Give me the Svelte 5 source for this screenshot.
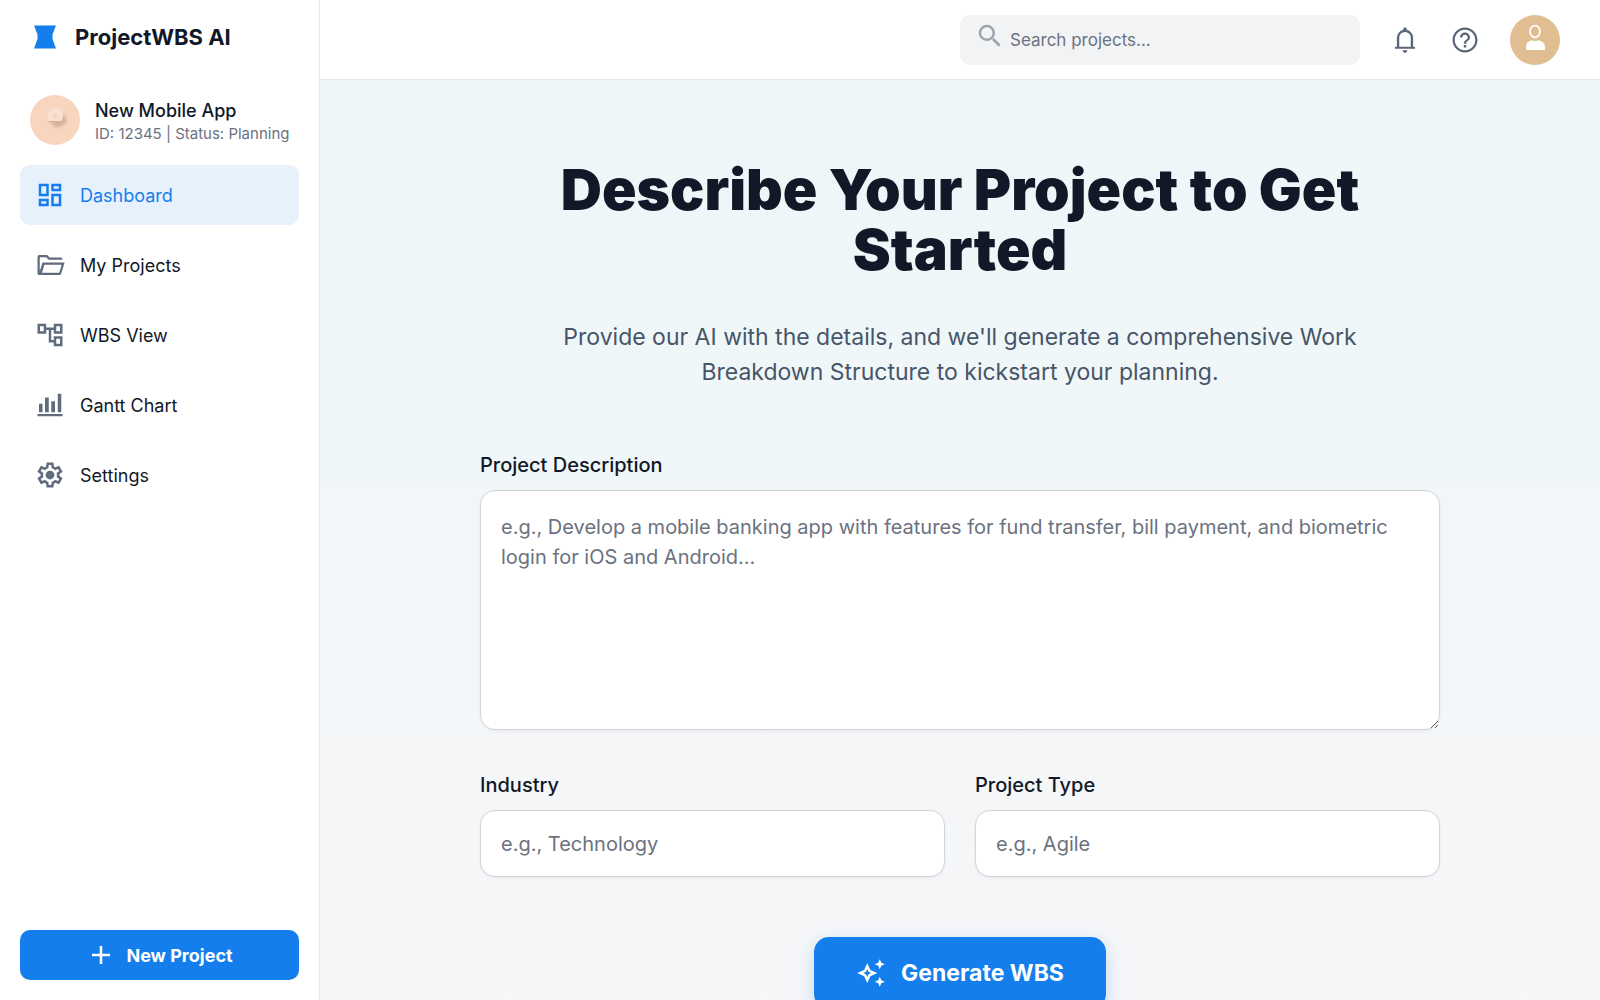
<script>
  const nav = [
    { label: 'Dashboard', active: true, d: 'M19 5v2h-4V5h4M9 5v6H5V5h4m10 8v6h-4v-6h4M9 17v2H5v-2h4M21 3h-8v6h8V3zM11 3H3v10h8V3zm10 8h-8v10h8V11zm-10 4H3v6h8v-6z' },
    { label: 'My Projects', d: 'M3.500 20Q2 20 2 18.500V5.500Q2 4 3.500 4H9.700L11.700 6H20.500Q22 6 22 7.700H11L9 5.800H4.200Q3.800 5.800 3.800 6.200V17L6 10H23.700L21 18.700Q20.600 20 19.400 20ZM5.600 18.200H19.400L21.300 11.800H7.500Z' },
    { label: 'WBS View', d: 'M22 11V3h-7v3H9V3H2v8h7V8h2v10h4v3h7v-8h-7v3h-2V8h2v3h7zM7 9H4V5h3v4zm10 6h3v4h-3v-4zm0-10h3v4h-3V5z' },
    { label: 'Gantt Chart', d: 'M2 19.200H22V21H2ZM3.200 11H6V17.800H3.200ZM8 6H11V17.800H8ZM13 9H16V17.800H13ZM18.200 3H21V17.800H18.200Z' },
    { label: 'Settings', d: 'M9.250 22L8.850 18.800Q8.525 18.675 8.238 18.500T7.675 18.125L4.700 19.375L1.950 14.625L4.525 12.675Q4.500 12.500 4.500 12.338V11.663Q4.500 11.500 4.525 11.325L1.950 9.375L4.700 4.625L7.675 5.875Q7.950 5.675 8.250 5.500T8.850 5.200L9.250 2H14.750L15.150 5.200Q15.475 5.325 15.763 5.500T16.325 5.875L19.300 4.625L22.050 9.375L19.475 11.325Q19.500 11.500 19.500 11.663V12.338Q19.500 12.500 19.450 12.675L22.025 14.625L19.275 19.375L16.325 18.125Q16.050 18.325 15.750 18.500T15.150 18.800L14.750 22ZM11 20H12.975L13.325 17.350Q14.100 17.150 14.763 16.763T15.975 15.825L18.450 16.850L19.425 15.150L17.275 13.525Q17.400 13.175 17.450 12.788T17.500 12T17.450 11.213T17.275 10.475L19.425 8.850L18.450 7.150L15.975 8.200Q15.425 7.625 14.763 7.238T13.325 6.650L13 4H11.025L10.675 6.650Q9.900 6.850 9.238 7.238T8.025 8.175L5.550 7.150L4.575 8.850L6.725 10.450Q6.600 10.825 6.550 11.200T6.500 12Q6.500 12.400 6.550 12.775T6.725 13.525L4.575 15.150L5.550 16.850L8.025 15.800Q8.575 16.375 9.238 16.763T10.675 17.350ZM12 15.500A3.500 3.500 0 1 0 12 8.500A3.500 3.500 0 1 0 12 15.500Z' }
  ];
</script>

<div class="app">
  <aside>
    <div class="brand">
      <svg viewBox="0 0 24 24" width="24" height="24"><path d="M1 .5H23L19.500 9.500V14L23 23.500H1L4.500 14V9.500Z" fill="#147fec" /></svg>
      <span>ProjectWBS AI</span>
    </div>
    <div class="project">
      <svg class="avatar" viewBox="0 0 50 50" width="50" height="50">
        <defs>
          <filter id="soft" x="-50%" y="-50%" width="200%" height="200%"><feGaussianBlur stdDeviation="1.5" /></filter>
        </defs>
        <circle cx="25" cy="25" r="25" fill="#f7d5bf" />
        <path d="M20 27L34 19L37 27L31 32H25Z" fill="#c9a48c" opacity=".7" filter="url(#soft)" />
        <path d="M18 26V20a7.500 7 0 0 1 15 0V24q0 2.500-2.500 2.500Z" fill="#fae0d0" />
        <path d="M18.500 26.500H30.500q2 0 2.300-3" fill="none" stroke="#d4b199" />
        <circle cx="25" cy="21" r="1.500" fill="none" stroke="#efc9b2" />
      </svg>
      <div>
        <div class="pname">New Mobile App</div>
        <div class="pmeta">ID: 12345 | Status: Planning</div>
      </div>
    </div>
    <nav>
      {#each nav as item}
        <a href="#top" class:active={item.active}>
          <svg viewBox="0 0 24 24" width="30" height="30"><path fill="currentColor" fill-rule="evenodd" d={item.d} /></svg>
          <span>{item.label}</span>
        </a>
      {/each}
    </nav>
    <button class="new" type="button">
      <svg viewBox="0 0 24 24" width="30" height="30"><path d="M12 4.800v14.400M4.800 12h14.400" stroke="currentColor" stroke-width="2" /></svg>
      <span>New Project</span>
    </button>
  </aside>

  <div class="page">
    <header>
      <label class="search">
        <svg viewBox="0 0 24 24" width="30" height="30"><path fill="currentColor" d="M15.500 14h-.79l-.28-.27A6.471 6.471 0 0 0 16 9.500 6.500 6.500 0 1 0 9.500 16c1.610 0 3.090-.59 4.230-1.570l.27.28v.79l5 4.990L20.490 19l-4.990-5zm-6 0C7.010 14 5 11.990 5 9.500S7.010 5 9.500 5 14 7.010 14 9.500 11.990 14 9.500 14z" /></svg>
        <input type="search" placeholder="Search projects..." aria-label="Search projects" />
      </label>
      <button class="icon" type="button" aria-label="Notifications">
        <svg viewBox="0 0 24 24" width="30" height="30"><path fill="currentColor" fill-rule="evenodd" d="M4 19V17.300H5.500V10Q5.500 7.925 7 6.100T10.300 4Q10.500 2.600 12 1.500Q13.500 2.600 13.700 4Q15.500 4.300 17 6.100T18.500 10V17.300H20V19ZM12 22.300Q10.200 21.800 10 20.200H14Q13.800 21.800 12 22.300ZM7.400 17.300H16.600V10Q16.600 8 15.200 6.800T12 5.600T8.800 6.800T7.400 10Z" /></svg>
      </button>
      <button class="icon" type="button" aria-label="Help">
        <svg viewBox="0 0 24 24" width="30" height="30"><path fill="currentColor" d="M11 18h2v-2h-2v2zm1-16C6.480 2 2 6.480 2 12s4.480 10 10 10 10-4.480 10-10S17.520 2 12 2zm0 18.200c-4.500 0-8.200-3.700-8.200-8.200s3.700-8.200 8.200-8.200 8.200 3.700 8.200 8.200-3.700 8.200-8.200 8.200zm0-14.200c-2.210 0-4 1.790-4 4h1.800c0-1.200 1-2.200 2.200-2.200s2.200.9 2.200 2.200c0 2-3.100 1.900-3.100 5h1.800c0-2.250 3.100-2.500 3.100-5 0-2.210-1.790-4-4-4z" /></svg>
      </button>
      <button class="user" type="button" aria-label="Account">
        <svg viewBox="0 0 50 50" width="50" height="50">
          <circle cx="25" cy="25" r="25" fill="#e1bd92" />
          <ellipse cx="25" cy="16.500" rx="5" ry="5.800" fill="#e1bd92" stroke="#fff" stroke-width="1.700" />
          <path d="M16 35V32.500Q16 26 22 25.200Q25 27 28 25.200Q35 26 35 32.500V35Z" fill="#fff" />
        </svg>
      </button>
    </header>

    <main id="top">
      <form>
        <h1>Describe Your Project to Get Started</h1>
        <p>Provide our AI with the details, and we'll generate a comprehensive Work Breakdown Structure to kickstart your planning.</p>
        <div class="fields">
          <div class="field">
            <label for="description">Project Description</label>
            <textarea id="description" placeholder="e.g., Develop a mobile banking app with features for fund transfer, bill payment, and biometric login for iOS and Android..."></textarea>
          </div>
          <div class="row">
            <div class="field">
              <label for="industry">Industry</label>
              <input id="industry" type="text" placeholder="e.g., Technology" />
            </div>
            <div class="field">
              <label for="type">Project Type</label>
              <input id="type" type="text" placeholder="e.g., Agile" />
            </div>
          </div>
        </div>
        <button class="generate" type="button">
          <svg viewBox="0 0 24 24" width="30" height="30"><path fill="currentColor" fill-rule="evenodd" d="M19 9L17.750 6.250L15 5L17.750 3.750L19 1L20.250 3.750L23 5L20.250 6.250ZM19 23L17.750 20.250L15 19L17.750 17.750L19 15L20.250 17.750L23 19L20.250 20.250ZM9 20L6.500 14.500L1 12L6.500 9.500L9 4L11.500 9.500L17 12L11.500 14.500ZM9 15.150L10 13L12.150 12L10 11L9 8.850L8 11L5.850 12L8 13Z" /></svg>
          <span>Generate WBS</span>
        </button>
      </form>
    </main>
  </div>
</div>

<style>
  :global(body) { margin: 0; }
  .app, .app * { box-sizing: border-box; }
  .app {
    display: flex;
    height: 100vh;
    overflow: hidden;
    font-family: Inter, "Liberation Sans", sans-serif;
    color: #111827;
    background: #fff;
  }
  button, input, textarea { font: inherit; }
  svg { display: block; flex: none; }
  aside {
    width: 320px;
    flex: none;
    display: flex;
    flex-direction: column;
    padding: 20px;
    border-right: 1px solid #e5e7eb;
  }
  .brand {
    display: flex;
    align-items: center;
    gap: 18px;
    padding: 0 13px;
    height: 34px;
    font-size: 22px;
    font-weight: 700;
  }
  .project {
    display: flex;
    align-items: center;
    gap: 15px;
    padding: 0 10px;
    margin: 41px 0 20px;
    white-space: nowrap;
  }
  .pname { padding-top: 2px; font-size: 18px; font-weight: 500; line-height: 25px; }
  .pmeta { font-size: 15px; line-height: 22px; color: #6b7280; }
  nav { display: flex; flex-direction: column; gap: 10px; flex: 1; }
  nav a {
    display: flex;
    align-items: center;
    gap: 15px;
    height: 60px;
    padding: 0 15px;
    border-radius: 10px;
    font-size: 18px;
    font-weight: 400;
    color: #111827;
    text-decoration: none;
  }
  nav a svg { color: #606b7d; }
  nav a.active, nav a.active svg { color: #147fec; }
  nav a.active { background: #e7f1fc; }
  button { border: 0; cursor: pointer; }
  .new {
    display: flex;
    align-items: center;
    justify-content: center;
    gap: 10px;
    height: 50px;
    padding: 0 20px;
    border-radius: 10px;
    background: #147fec;
    color: #fff;
    font-size: 18px;
    font-weight: 700;
  }
  .page { flex: 1; min-width: 0; display: flex; flex-direction: column; }
  header {
    display: flex;
    align-items: center;
    justify-content: flex-end;
    height: 80px;
    flex: none;
    padding: 0 40px;
    border-bottom: 1px solid #e5e7eb;
  }
  .search {
    display: flex;
    width: 400px;
    height: 50px;
    margin-right: 20px;
    padding: 0 15px;
    gap: 5px;
    border-radius: 10px;
    background: #f2f3f5;
    color: #9ca3af;
  }
  .search svg { margin-top: 6px; }
  .search input {
    flex: 1;
    min-width: 0;
    padding: 0;
    border: 0;
    outline: 0;
    background: none;
    font-size: 17px;
    color: #111827;
  }
  input::placeholder, textarea::placeholder { color: #6b7280; opacity: 1; }
  .icon {
    display: grid;
    place-items: center;
    width: 50px;
    height: 50px;
    margin-right: 10px;
    padding: 0;
    background: none;
    color: #5b6678;
  }
  .user { margin-left: 10px; padding: 0; border-radius: 50%; background: none; }
  main {
    flex: 1;
    min-height: 0;
    overflow-y: auto;
    scrollbar-width: none;
    padding: 80px 40px;
    background: linear-gradient(180deg, #eef6f9 0%, #f1f7f8 45%, #f5f6f8 80%, #f6f7f9 100%);
  }
  form { display: flex; flex-direction: column; align-items: center; max-width: 960px; margin: 0 auto; }
  h1 {
    max-width: 840px;
    margin: 0;
    font-size: 57px;
    line-height: 60px;
    font-weight: 900;
    text-align: center;
  }
  p {
    max-width: 840px;
    margin: 40px 0 60px;
    font-size: 23px;
    line-height: 35px;
    text-align: center;
    color: #475569;
  }
  .fields { align-self: stretch; display: flex; flex-direction: column; gap: 40px; }
  .row { display: grid; grid-template-columns: 1fr 1fr; gap: 30px; }
  .field { display: flex; flex-direction: column; gap: 10px; min-width: 0; }
  .field label { font-size: 20px; line-height: 30px; font-weight: 500; }
  .field input, textarea {
    width: 100%;
    padding: 21px 20px;
    border: 1px solid #d1d5db;
    border-radius: 15px;
    background: #fff;
    box-shadow: 0 1px 3px rgba(15, 23, 42, 0.06);
    font-size: 20px;
    line-height: 30px;
    color: #111827;
  }
  .field input { height: 67px; padding: 0 20px; }
  textarea { display: block; height: 240px; resize: vertical; }
  .generate {
    display: flex;
    align-items: center;
    gap: 15px;
    height: 72px;
    flex: none;
    margin-top: 60px;
    padding: 0 42px;
    border-radius: 15px;
    background: #147fec;
    box-shadow: 0 6px 18px rgba(20, 127, 236, 0.25);
    color: #fff;
    font-size: 23px;
    font-weight: 700;
  }
</style>
